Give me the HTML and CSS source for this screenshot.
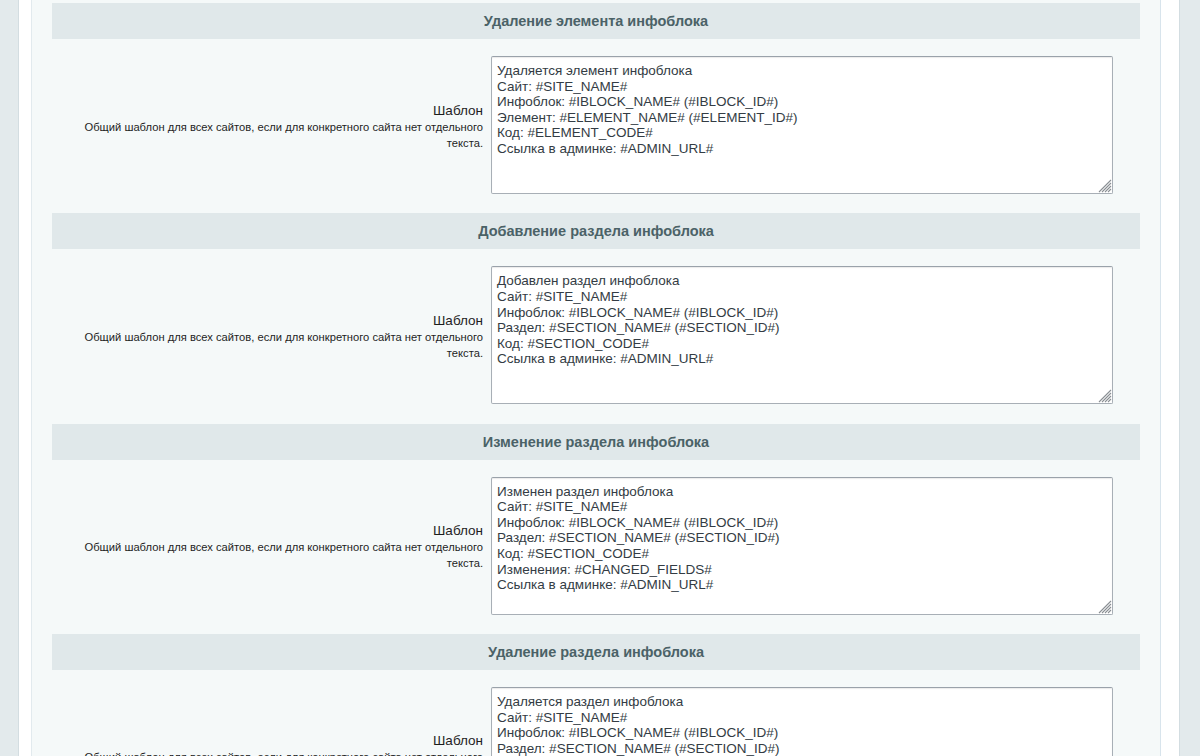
FILE: index.html
```html
<!DOCTYPE html>
<html lang="ru">
<head>
    <meta charset="UTF-8">
    <title>Настройки уведомлений инфоблока</title>
    <link rel="stylesheet" href="styles.css">
</head>
<body>
    <div class="page">
        <div class="panel">
            <!-- Удаление элемента -->
            <div class="heading">Удаление элемента инфоблока</div>
            <div class="field-row">
                <div class="field-label">
                    <div class="label-title">Шаблон</div>
                    <div class="label-hint">Общий шаблон для всех сайтов, если для конкретного сайта нет отдельного текста.</div>
                </div>
                <div class="field-value">
                    <textarea>Удаляется элемент инфоблока
Сайт: #SITE_NAME#
Инфоблок: #IBLOCK_NAME# (#IBLOCK_ID#)
Элемент: #ELEMENT_NAME# (#ELEMENT_ID#)
Код: #ELEMENT_CODE#
Ссылка в админке: #ADMIN_URL#</textarea>
                    <svg class="grip" width="14" height="14" viewBox="0 0 14 14"><path d="M13 1L1 13M13 4L4 13M13 7L7 13M13 10L10 13"/></svg>
                </div>
            </div>

            <!-- Добавление раздела -->
            <div class="heading">Добавление раздела инфоблока</div>
            <div class="field-row">
                <div class="field-label">
                    <div class="label-title">Шаблон</div>
                    <div class="label-hint">Общий шаблон для всех сайтов, если для конкретного сайта нет отдельного текста.</div>
                </div>
                <div class="field-value">
                    <textarea>Добавлен раздел инфоблока
Сайт: #SITE_NAME#
Инфоблок: #IBLOCK_NAME# (#IBLOCK_ID#)
Раздел: #SECTION_NAME# (#SECTION_ID#)
Код: #SECTION_CODE#
Ссылка в админке: #ADMIN_URL#</textarea>
                    <svg class="grip" width="14" height="14" viewBox="0 0 14 14"><path d="M13 1L1 13M13 4L4 13M13 7L7 13M13 10L10 13"/></svg>
                </div>
            </div>

            <!-- Изменение раздела -->
            <div class="heading">Изменение раздела инфоблока</div>
            <div class="field-row">
                <div class="field-label">
                    <div class="label-title">Шаблон</div>
                    <div class="label-hint">Общий шаблон для всех сайтов, если для конкретного сайта нет отдельного текста.</div>
                </div>
                <div class="field-value">
                    <textarea>Изменен раздел инфоблока
Сайт: #SITE_NAME#
Инфоблок: #IBLOCK_NAME# (#IBLOCK_ID#)
Раздел: #SECTION_NAME# (#SECTION_ID#)
Код: #SECTION_CODE#
Изменения: #CHANGED_FIELDS#
Ссылка в админке: #ADMIN_URL#</textarea>
                    <svg class="grip" width="14" height="14" viewBox="0 0 14 14"><path d="M13 1L1 13M13 4L4 13M13 7L7 13M13 10L10 13"/></svg>
                </div>
            </div>

            <!-- Удаление раздела -->
            <div class="heading">Удаление раздела инфоблока</div>
            <div class="field-row">
                <div class="field-label">
                    <div class="label-title">Шаблон</div>
                    <div class="label-hint">Общий шаблон для всех сайтов, если для конкретного сайта нет отдельного текста.</div>
                </div>
                <div class="field-value">
                    <textarea>Удаляется раздел инфоблока
Сайт: #SITE_NAME#
Инфоблок: #IBLOCK_NAME# (#IBLOCK_ID#)
Раздел: #SECTION_NAME# (#SECTION_ID#)
Код: #SECTION_CODE#
Ссылка в админке: #ADMIN_URL#</textarea>
                    <svg class="grip" width="14" height="14" viewBox="0 0 14 14"><path d="M13 1L1 13M13 4L4 13M13 7L7 13M13 10L10 13"/></svg>
                </div>
            </div>
        </div>
    </div>
</body>
</html>
```
FILE: styles.css
```css
* {
    margin: 0;
    padding: 0;
    box-sizing: border-box;
}

html, body {
    height: 756px;
    overflow: hidden;
}

body {
    background-color: #e3eaec;
    font-family: "Liberation Sans", Arial, sans-serif;
    color: #000;
}

/* белая рамка страницы */
.page {
    margin: 0 20px 0 18px;
    height: 100%;
    background-color: #fff;
    border-left: 1px solid #d3dde1;
    border-right: 1px solid #d3dde1;
    padding: 0 18px 0 12px;
}

/* светлая панель формы */
.panel {
    height: 100%;
    background-color: #f5f9f9;
    border-left: 1px solid #e2eaee;
    border-right: 1px solid #d8e4ec;
    padding: 3px 20px 0 20px;
}

.heading {
    height: 36px;
    line-height: 36px;
    background-color: #e0e8ea;
    color: #4b6267;
    font-size: 14.5px;
    font-weight: bold;
    text-align: center;
}

.field-row {
    display: grid;
    grid-template-columns: 435px 1fr;
    align-items: center;
    padding: 17px 0 19.33px 0;
}

.field-label {
    padding: 3px 4px 0 0;
    text-align: right;
    color: #1e1e1e;
}

.label-title {
    font-size: 13.5px;
    line-height: 16px;
}

.label-hint {
    font-size: 11.2px;
    line-height: 16px;
}

.field-value {
    position: relative;
    padding-left: 4px;
}

.field-value textarea {
    display: block;
    width: 622px;
    height: 138px;
    padding: 6px 5px 5px 5px;
    border: 1px solid #a8afb6;
    border-top-color: #9aa2aa;
    border-radius: 2px;
    box-shadow: inset 0 1px 1px rgba(0, 0, 0, 0.08);
    background-color: #fff;
    color: #333c44;
    font-family: "Liberation Sans", Arial, sans-serif;
    font-size: 13.5px;
    line-height: 15.6px;
    resize: none;
    overflow: hidden;
}

/* уголок изменения размера */
.grip {
    position: absolute;
    left: 611px;
    bottom: 1px;
    pointer-events: none;
}

.grip path {
    stroke: #8a8f94;
    stroke-width: 1.1;
    fill: none;
}
```
